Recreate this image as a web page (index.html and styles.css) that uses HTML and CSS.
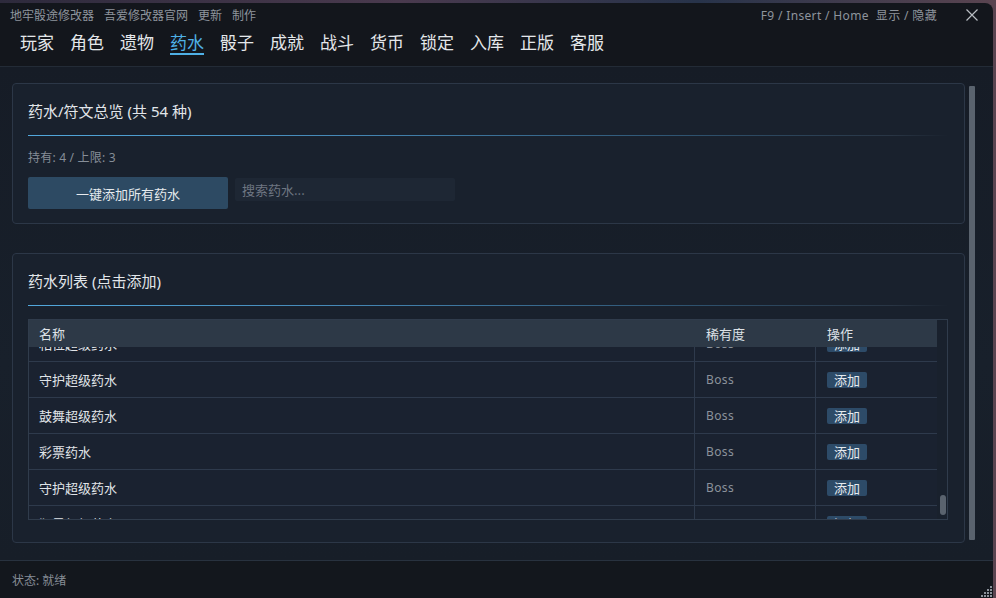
FILE: index.html
```html
<!DOCTYPE html>
<html>
<head>
    <meta charset="utf-8">
    <title>地牢骰途修改器</title>
    <link rel="stylesheet" href="styles.css">
</head>
<body>
    <div class="window">
        <div class="menubar">
            <div class="menu-left">
                <span>地牢骰途修改器</span>
                <span>吾爱修改器官网</span>
                <span>更新</span>
                <span>制作</span>
            </div>
            <div class="menu-right">
                <span class="hotkey">F9 / Insert / Home&nbsp; 显示 / 隐藏</span>
                <svg class="close" width="12" height="12" viewBox="0 0 12 12">
                    <path d="M0.5 0.5 L11.5 11.5 M11.5 0.5 L0.5 11.5" stroke="#b9bdc3" stroke-width="1.2" fill="none"/>
                </svg>
            </div>
        </div>

        <div class="tabs">
            <span class="tab">玩家</span>
            <span class="tab">角色</span>
            <span class="tab">遗物</span>
            <span class="tab active">药水</span>
            <span class="tab">骰子</span>
            <span class="tab">成就</span>
            <span class="tab">战斗</span>
            <span class="tab">货币</span>
            <span class="tab">锁定</span>
            <span class="tab">入库</span>
            <span class="tab">正版</span>
            <span class="tab">客服</span>
        </div>

        <div class="content">
            <div class="panels">
                <div class="panel">
                    <div class="panel-title">药水/符文总览 (共 54 种)</div>
                    <div class="title-line"></div>
                    <div class="stat">持有: 4 / 上限: 3</div>
                    <div class="actions">
                        <button class="btn-primary">一键添加所有药水</button>
                        <input class="search" type="text" placeholder="搜索药水...">
                    </div>
                </div>

                <div class="panel panel-list">
                    <div class="panel-title">药水列表 (点击添加)</div>
                    <div class="title-line"></div>
                    <div class="table">
                        <div class="table-scroll" id="tableScroll">
                            <div class="row head">
                                <div class="cell">名称</div>
                                <div class="cell">稀有度</div>
                                <div class="cell">操作</div>
                            </div>
                            <div id="rows"></div>
                        </div>
                        <div class="table-track"><div class="table-thumb" id="tableThumb"></div></div>
                    </div>
                </div>
            </div>
            <div class="page-scroll"><div class="page-thumb"></div></div>
        </div>

        <div class="statusbar">
            <span>状态: 就绪</span>
            <svg class="grip" width="12" height="12" viewBox="0 0 12 12" fill="#8a9099">
                <rect x="10" y="1" width="2" height="2"/>
                <rect x="7" y="4" width="2" height="2"/><rect x="10" y="4" width="2" height="2"/>
                <rect x="4" y="7" width="2" height="2"/><rect x="7" y="7" width="2" height="2"/><rect x="10" y="7" width="2" height="2"/>
                <rect x="1" y="10" width="2" height="2"/><rect x="4" y="10" width="2" height="2"/><rect x="7" y="10" width="2" height="2"/><rect x="10" y="10" width="2" height="2"/>
            </svg>
        </div>
    </div>

    <script>
        const potions = [
            ['治疗药水', '普通'], ['力量药水', '普通'], ['敏捷药水', '普通'], ['格挡药水', '普通'],
            ['火焰药水', '普通'], ['冰霜药水', '普通'], ['毒性药水', '普通'], ['能量药水', '普通'],
            ['迅捷药水', '普通'], ['虚弱药水', '普通'], ['易伤药水', '普通'], ['恐惧药水', '普通'],
            ['骰子药水', '普通'], ['重掷药水', '普通'], ['幸运药水', '罕见'], ['再生药水', '罕见'],
            ['铁皮药水', '罕见'], ['狂暴药水', '罕见'], ['专注药水', '罕见'], ['净化药水', '罕见'],
            ['复制药水', '罕见'], ['精准药水', '罕见'], ['坚韧药水', '罕见'], ['暗影药水', '罕见'],
            ['雷电药水', '罕见'], ['祝福药水', '稀有'], ['奇迹药水', '稀有'], ['时光药水', '稀有'],
            ['巨人药水', '稀有'], ['炼金药水', '稀有'], ['混沌药水', '稀有'], ['凤凰药水', '稀有'],
            ['贪婪药水', '稀有'], ['守护符文', '稀有'], ['力量符文', '稀有'], ['敏捷符文', '稀有'],
            ['火焰符文', '稀有'], ['冰霜符文', '稀有'], ['治疗超级药水', 'Boss'], ['力量超级药水', 'Boss'],
            ['敏捷超级药水', 'Boss'], ['格挡超级药水', 'Boss'], ['火焰超级药水', 'Boss'], ['冰霜超级药水', 'Boss'],
            ['毒性超级药水', 'Boss'], ['能量超级药水', 'Boss'], ['迅捷超级药水', 'Boss'], ['相位超级药水', 'Boss'],
            ['守护超级药水', 'Boss'], ['鼓舞超级药水', 'Boss'], ['彩票药水', 'Boss'], ['守护超级药水', 'Boss'],
            ['狂暴超级药水', 'Boss'], ['幸运超级药水', 'Boss']
        ];

        const scroller = document.getElementById('tableScroll');
        const rows = document.getElementById('rows');

        potions.forEach(p => {
            const row = document.createElement('div');
            row.className = 'row';
            row.innerHTML = '<div class="cell name">' + p[0] + '</div>' +
                '<div class="cell rarity">' + p[1] + '</div>' +
                '<div class="cell"><span class="btn-add">添加</span></div>';
            rows.appendChild(row);
        });

        scroller.scrollTop = 1713;

        // custom scrollbar thumb
        const viewH = scroller.clientHeight;
        const total = scroller.scrollHeight;
        const thumbH = Math.max(20, Math.round(viewH * viewH / total));
        const thumbTop = Math.round(scroller.scrollTop / (total - viewH) * (viewH - thumbH)) + 2;
        const thumb = document.getElementById('tableThumb');
        thumb.style.height = thumbH + 'px';
        thumb.style.marginTop = thumbTop + 'px';
    </script>
</body>
</html>
```

FILE: styles.css
```css
html, body {
    margin: 0;
    padding: 0;
}

body {
    width: 996px;
    height: 598px;
    overflow: hidden;
    background: linear-gradient(90deg, #2d2a3c, #4a3a4e 40%, #27334a 70%, #5a4450);
    font-family: "Noto Sans", "Noto Sans CJK SC", sans-serif;
}

.window {
    width: 993px;
    height: 595px;
    margin-top: 3px;
    background: #13161c;
    border-top-right-radius: 8px;
    display: flex;
    flex-direction: column;
    overflow: hidden;
}

.menubar {
    height: 24px;
    display: flex;
    justify-content: space-between;
    align-items: center;
    padding: 0 15px 0 10px;
    font-size: 12px;
    color: #8e949c;
}

.menu-left {
    display: flex;
    gap: 10px;
}

.menu-right {
    display: flex;
    align-items: center;
}

.hotkey {
    letter-spacing: 0.35px;
}

.close {
    margin-left: 29px;
}

.tabs {
    display: flex;
    gap: 16px;
    padding: 5px 0 11px 20px;
    border-bottom: 1px solid #232b36;
}

.tab {
    font-size: 17px;
    line-height: 21px;
    color: #e4e7ea;
    border-bottom: 2px solid transparent;
}

.tab.active {
    color: #4fb0e6;
    border-bottom-color: #4fb0e6;
}

.content {
    height: 493px;
    display: flex;
    padding: 16px 18px 0 12px;
    box-sizing: border-box;
    background: linear-gradient(180deg, #161c26, #18202b 60%, #171e28);
}

.panels {
    flex: 1;
}

.page-scroll {
    width: 6px;
    margin: 3px 0 20px 4px;
    height: 454px;
    background: #5a636e;
    border-radius: 1px;
}

.panel {
    background: #19212d;
    border: 1px solid #2c3747;
    border-radius: 4px;
    padding: 16px 16px 14px 15px;
    height: 141px;
    box-sizing: border-box;
}

.panel-list {
    margin-top: 29px;
    height: 290px;
}

.panel-title {
    font-size: 15px;
    line-height: 22px;
    color: #e2e6ea;
}

.title-line {
    height: 1px;
    margin-top: 13px;
    background: linear-gradient(90deg, #52a8dc 0%, #4587b5 35%, #2f5573 70%, rgba(70, 90, 110, 0.35) 94%, transparent 100%);
}

.stat {
    margin-top: 13px;
    font-size: 12px;
    line-height: 18px;
    color: #868e98;
    letter-spacing: 0.2px;
}

.actions {
    display: flex;
    align-items: flex-start;
    gap: 7px;
    margin-top: 10px;
}

.btn-primary {
    width: 200px;
    height: 32px;
    border: none;
    border-radius: 2px;
    background: #2d4a63;
    color: #e6eaee;
    font-family: "Noto Sans CJK SC", sans-serif;
    font-size: 13px;
}

.search {
    width: 220px;
    height: 23px;
    margin-top: 1px;
    box-sizing: border-box;
    border: none;
    border-radius: 2px;
    background: #1e2734;
    padding: 0 7px;
    color: #d0d4d8;
    font-family: "Noto Sans CJK SC", sans-serif;
    font-size: 13px;
    outline: none;
}

.search::placeholder {
    color: #6e7682;
}

.table {
    display: flex;
    margin-top: 13px;
    border: 1px solid #303c4c;
    height: 201px;
    box-sizing: border-box;
}

.table-scroll {
    flex: 1;
    height: 199px;
    overflow: hidden;
}

.table-track {
    width: 10px;
    background: #19212d;
}

.table-thumb {
    width: 6px;
    margin-left: 3px;
    background: #5a636e;
    border-radius: 3px;
}

.row {
    display: grid;
    grid-template-columns: 1fr 121px 122px;
    height: 36px;
    border-bottom: 1px solid #2e3a4c;
    box-sizing: border-box;
    background: #1a2230;
    font-size: 13px;
    color: #e0e4e8;
}

.row .cell {
    display: flex;
    align-items: center;
    padding-left: 10px;
}

.row .cell + .cell {
    border-left: 1px solid #2e3a4c;
    padding-left: 11px;
}

.row.head {
    position: sticky;
    top: 0;
    z-index: 1;
    height: 27px;
    border-bottom: none;
    background: #2d3947;
    color: #dde1e6;
}

.row.head .cell + .cell {
    border-left: none;
    padding-left: 12px;
}

.rarity {
    color: #8b929b;
    font-size: 12px;
    letter-spacing: 0.4px;
}

.btn-add {
    display: inline-block;
    width: 40px;
    height: 16px;
    line-height: 16px;
    text-align: center;
    background: #2d4b68;
    border-radius: 2px;
    color: #e6eaee;
    font-size: 13px;
}

.statusbar {
    flex: 1;
    display: flex;
    justify-content: space-between;
    align-items: center;
    padding: 0 1px 0 12px;
    border-top: 1px solid #28323f;
    background: #13171d;
    font-size: 12px;
    color: #878e97;
}

.grip {
    align-self: flex-end;
    margin-bottom: 1px;
}
```
